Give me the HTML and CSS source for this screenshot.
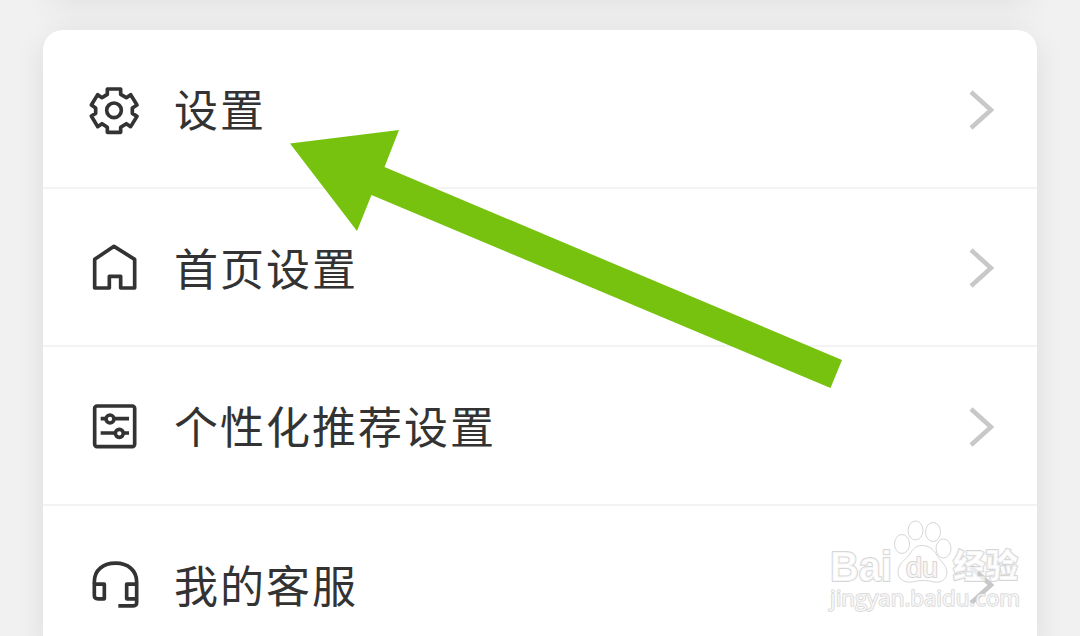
FILE: index.html
```
<!DOCTYPE html>
<html lang="zh-CN">
<head>
	<meta charset="utf-8">
	<title>设置</title>
	<link rel="stylesheet" href="styles.css">
</head>
<body>

<div class="previous"></div>

<ul class="menu">
	<li class="row">
		<svg class="icon" viewBox="54 42 156 156">
			<path d="M112 57H152V73L169 83L182 74L201 105L187 114V130L201 139L182 170L169 161L152 172V187H112V172L96 161L83 170L64 138L77 130V114L64 105L83 74L96 83L112 73Z"/>
			<circle cx="132" cy="121" r="22"/>
		</svg>
		<span class="label">设置</span>
		<svg class="chevron" viewBox="0 0 28 42"><path d="M4 3L24 21L4 39"/></svg>
	</li>
	<li class="row">
		<svg class="icon" viewBox="54 35 156 156">
			<path d="M74 173V87L132 48L194 87V173H152V138H118V173Z"/>
		</svg>
		<span class="label">首页设置</span>
		<svg class="chevron" viewBox="0 0 28 42"><path d="M4 3L24 21L4 39"/></svg>
	</li>
	<li class="row">
		<svg class="icon" viewBox="54 33 156 156">
			<rect x="74" y="48" width="120" height="122" rx="7"/>
			<path d="M92 86H108M134 86H177M92 129H135M161 129H177"/>
			<circle cx="120" cy="87" r="12"/>
			<circle cx="148" cy="130" r="12"/>
		</svg>
		<span class="label">个性化推荐设置</span>
		<svg class="chevron" viewBox="0 0 28 42"><path d="M4 3L24 21L4 39"/></svg>
	</li>
	<li class="row">
		<svg class="icon" viewBox="54 43.5 156 156">
			<path d="M73 119V112C73 76 100 56 137 56C174 56 200 78 200 112V174Q200 184 190 184H145"/>
			<path d="M73 119H103V163H84Q73 163 73 153ZM200 119H170V163H200"/>
		</svg>
		<span class="label">我的客服</span>
		<svg class="chevron" viewBox="0 0 28 42"><path d="M4 3L24 21L4 39"/></svg>
	</li>
</ul>

<!-- Pointer to the first row -->
<svg class="arrow" viewBox="0 0 1080 636">
	<path d="M290 143.500L399 130L384.500 167L842 360L830.500 388L371.500 195L357 231Z"/>
</svg>

<svg class="watermark" viewBox="0 0 200 96">
	<text class="brand" x="4" y="60.500" textLength="62" lengthAdjust="spacingAndGlyphs">Bai</text>
	<ellipse cx="76" cy="24" rx="7.500" ry="9.500"/>
	<ellipse cx="89.500" cy="10.500" rx="7.500" ry="9.500"/>
	<ellipse cx="107" cy="12" rx="7.500" ry="9.500"/>
	<ellipse cx="117.500" cy="28.500" rx="7.500" ry="9.500"/>
	<path d="M96 25.500C103 25.500 107 29 110 34C114 41 121 45 121 53C120 60 115 63 108 62C100 60 94 60 86 62C78 63 72 59 72 52C72 43 80 40 84 34C87 29 90 25.500 96 25.500Z"/>
	<text class="du" x="80" y="56.500" textLength="32" lengthAdjust="spacingAndGlyphs">du</text>
	<text class="exp" x="127" y="58" textLength="65" lengthAdjust="spacingAndGlyphs">经验</text>
	<text class="url" x="4" y="86" textLength="190" lengthAdjust="spacingAndGlyphs">jingyan.baidu.com</text>
</svg>

</body>
</html>
```
FILE: styles.css
```
body {
	margin: 0;
	height: 636px;
	overflow: hidden;
	position: relative;
	background: #f1f1f1;
	color: #333;
	font-family: "Noto Sans CJK SC", sans-serif;
}

/* Shadow of the card above */
.previous {
	height: 30px;
	background:
		linear-gradient(90deg, #f1f1f1 30px, transparent 75px, transparent 1005px, #f1f1f1 1050px),
		linear-gradient(#e6e6e6, #ebebeb 35%, #eee);
}

.menu {
	position: relative;
	list-style: none;
	height: 606px;
	margin: 0 43px;
	padding: 0;
	background: #fff;
	border-radius: 20px 20px 0 0;
	box-shadow: 0 10px 28px 2px rgba(0, 0, 0, .08);
	overflow: hidden;
}

.row {
	display: flex;
	align-items: center;
	box-sizing: border-box;
	height: 158.500px;
	padding: 3px 42px 0 45px;
	border-bottom: 2px solid #f3f3f3;
}

.icon {
	width: 52px;
	height: 52px;
	fill: none;
	stroke: #333;
	stroke-width: 11;
	stroke-linejoin: round;
}

.label {
	flex: 1;
	margin: -3px 0 0 34px;
	font-size: 44px;
	line-height: 60px;
	letter-spacing: 2px;
}

.chevron {
	width: 28px;
	height: 42px;
	fill: none;
	stroke: #c8c8c8;
	stroke-width: 4.500;
}

.arrow {
	position: absolute;
	left: 0;
	top: 0;
	width: 1080px;
	height: 636px;
	fill: #76c20e;
}

.watermark {
	position: absolute;
	left: 826px;
	top: 520px;
	width: 200px;
	height: 96px;
	fill: #fff;
	fill-opacity: .8;
	stroke: #d0d0d0;
	stroke-width: 1;
	opacity: .85;
}

.watermark text {
	stroke-width: 2;
	stroke-linejoin: round;
	paint-order: stroke;
}

.brand {
	font: bold 43px "Liberation Sans", sans-serif;
}

.du {
	font: 27px "Liberation Sans", sans-serif;
}

.exp {
	font: 900 33px "Noto Sans CJK SC", sans-serif;
}

.watermark .url {
	font: 21px "Open Sans", sans-serif;
	stroke-width: 1.500;
}
```
